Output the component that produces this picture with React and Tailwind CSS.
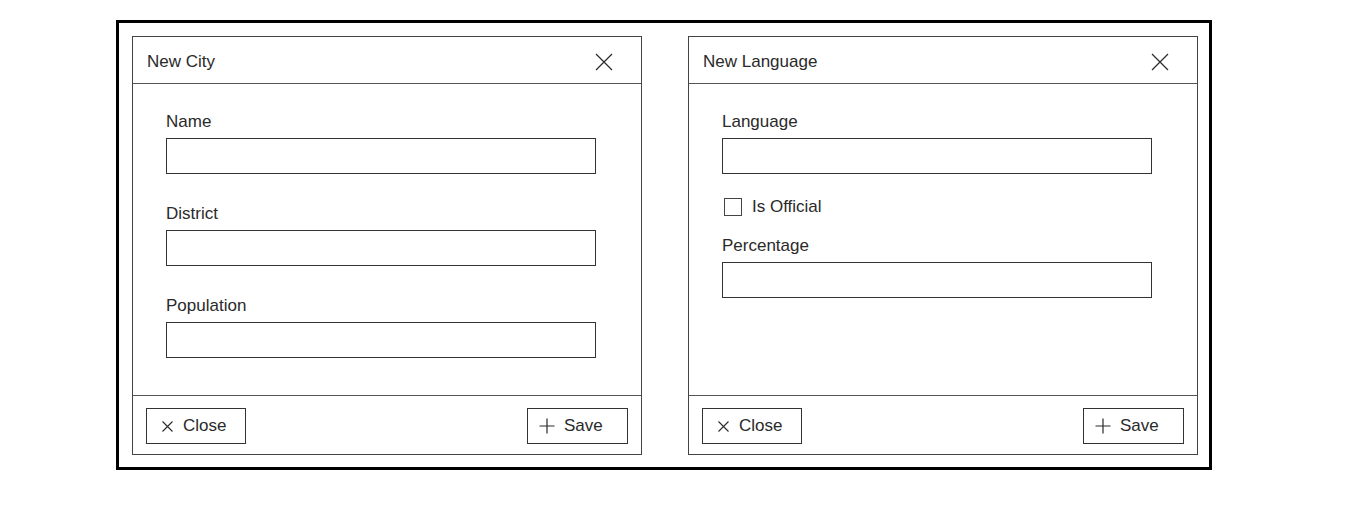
import React from "react";

const font = { fontFamily: '"Liberation Sans", Arial, sans-serif' };

function XIcon({ size = 18, stroke = 1.3 }) {
  return (
    <svg width={size} height={size} viewBox="0 0 18 18" fill="none">
      <path d="M1 1L17 17M17 1L1 17" stroke="#2a2a2a" strokeWidth={stroke} />
    </svg>
  );
}

function PlusIcon() {
  return (
    <svg width="16" height="16" viewBox="0 0 16 16" fill="none">
      <path d="M8 0.5V15.5M0.5 8H15.5" stroke="#2a2a2a" strokeWidth="1.2" />
    </svg>
  );
}

function Field({ label, first }) {
  return (
    <div className={first ? "flex flex-col" : "flex flex-col mt-[28px]"}>
      <div className="text-[17px] leading-[24px] text-[#2a2a2a] mb-[4px]">{label}</div>
      <div className="w-[430px] h-[36px] border border-[#333] bg-white" />
    </div>
  );
}

function Dialog({ title, children }) {
  return (
    <div className="w-[510px] h-[419px] border border-[#444] flex flex-col bg-white">
      <div className="h-[47px] border-b border-[#555] flex items-center justify-between pt-[4px] pl-[14px] pr-[28px]">
        <span className="text-[17px] leading-[24px] text-[#2a2a2a]">{title}</span>
        <XIcon size={18} stroke={1.2} />
      </div>
      <div className="flex-1 pt-[26px] pl-[33px] flex flex-col">{children}</div>
      <div className="h-[59px] border-t border-[#555] flex items-center justify-between pt-[2px] px-[13px]">
        <button className="w-[100px] h-[36px] border border-[#333] flex items-center pl-[15px] gap-[10px] text-[17px] text-[#2a2a2a]">
          <svg width="11" height="11" viewBox="0 0 11 11" fill="none">
            <path d="M0.5 0.5L10.5 10.5M10.5 0.5L0.5 10.5" stroke="#2a2a2a" strokeWidth="1.1" />
          </svg>
          <span>Close</span>
        </button>
        <button className="w-[101px] h-[36px] border border-[#333] flex items-center pl-[11px] gap-[9px] text-[17px] text-[#2a2a2a]">
          <PlusIcon />
          <span>Save</span>
        </button>
      </div>
    </div>
  );
}

export default function App() {
  return (
    <div className="w-[1350px] h-[516px] bg-white" style={font}>
      <div className="ml-[116px] pt-[20px]">
        <div className="w-[1096px] h-[450px] border-[3px] border-black flex gap-[46px] pl-[13px] pt-[13px]">
          <Dialog title="New City">
            <Field label="Name" first />
            <Field label="District" />
            <Field label="Population" />
          </Dialog>
          <Dialog title="New Language">
            <Field label="Language" first />
            <div className="mt-[21px] h-[24px] flex items-center pl-[2px] gap-[10px]">
              <div className="w-[18px] h-[18px] border border-[#444] bg-white" />
              <span className="text-[17px] leading-[24px] text-[#2a2a2a]">Is Official</span>
            </div>
            <div className="mt-[15px] flex flex-col">
              <div className="text-[17px] leading-[24px] text-[#2a2a2a] mb-[4px]">Percentage</div>
              <div className="w-[430px] h-[36px] border border-[#333] bg-white" />
            </div>
          </Dialog>
        </div>
      </div>
    </div>
  );
}
